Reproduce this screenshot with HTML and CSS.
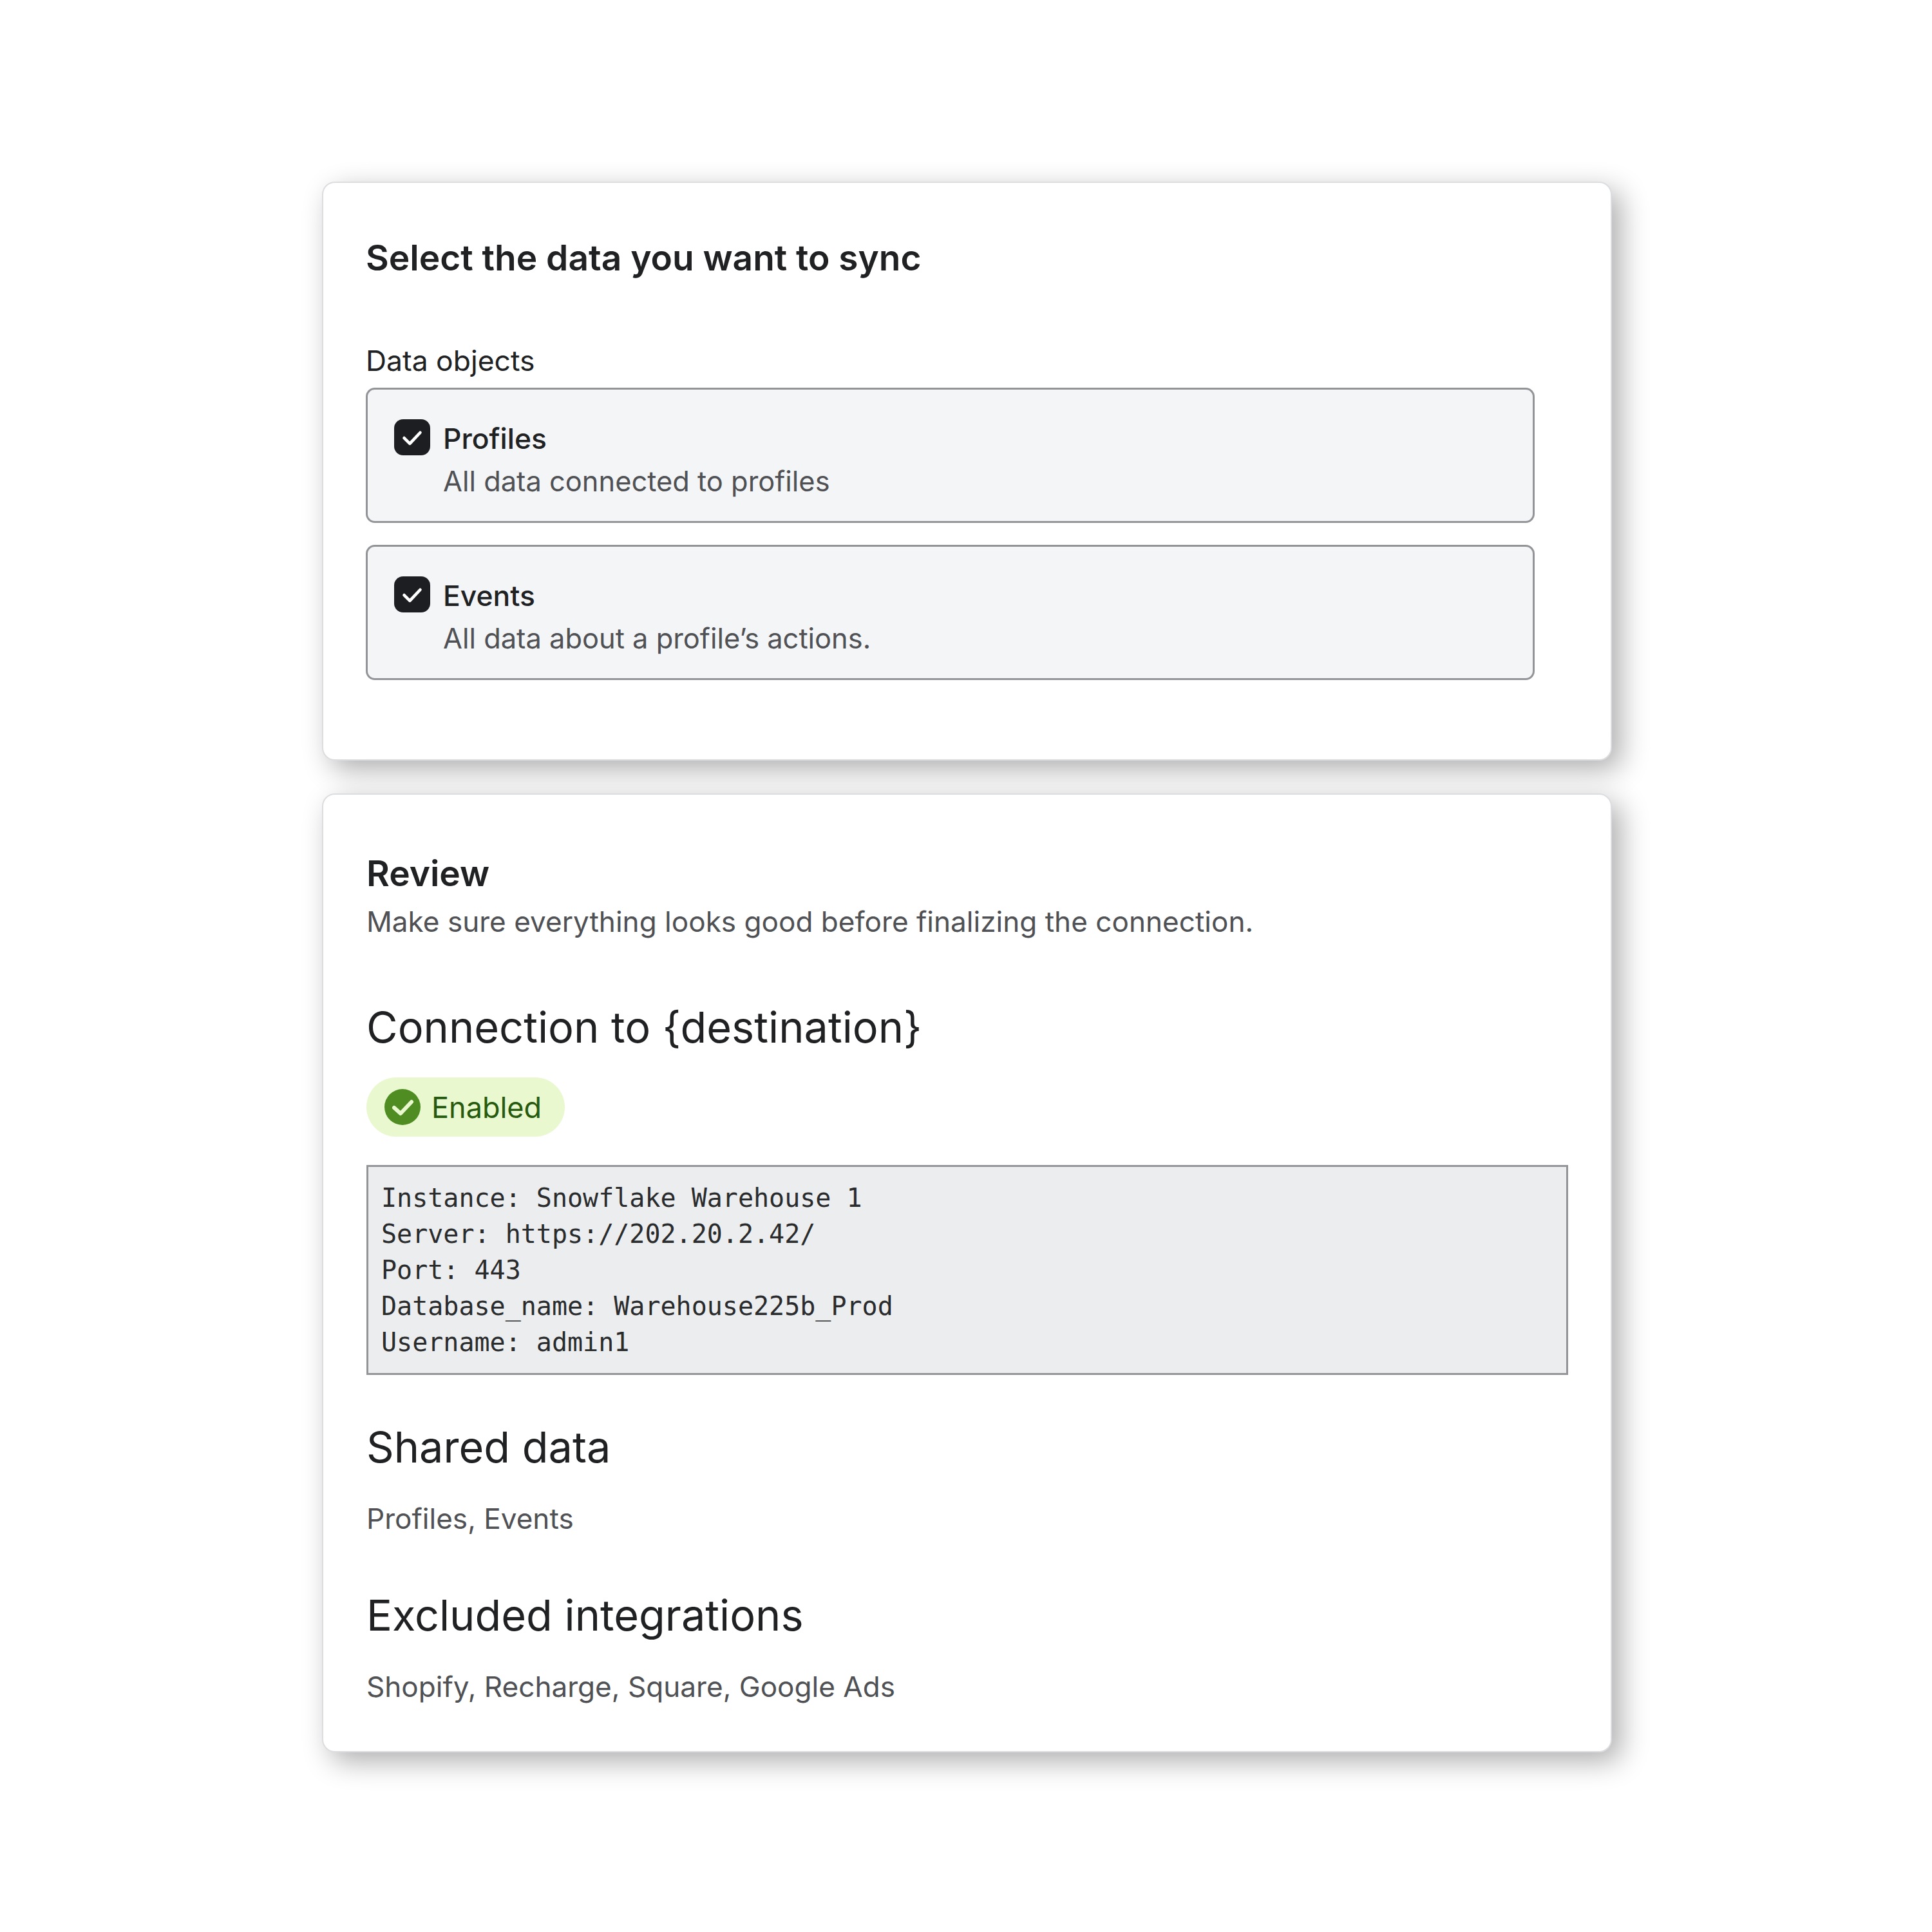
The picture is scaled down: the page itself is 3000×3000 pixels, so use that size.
FILE: index.html
```html
<!DOCTYPE html>
<html lang="en">
<head>
    <meta charset="UTF-8">
    <meta name="viewport" content="width=device-width, initial-scale=1.0">
    <title>Review connection</title>
    <link rel="stylesheet" href="styles.css">
</head>
<body>
    <div class="container">
        <section class="card card-select">
            <h2 class="card-title">Select the data you want to sync</h2>
            <div class="field-label">Data objects</div>
            <div class="option">
                <span class="checkbox">
                    <svg viewBox="0 0 54 54"><path d="M15 28l8.5 8.5L39 20" fill="none" stroke="white" stroke-width="4.5" stroke-linecap="round" stroke-linejoin="round"/></svg>
                </span>
                <div>
                    <div class="option-name">Profiles</div>
                    <div class="option-desc">All data connected to profiles</div>
                </div>
            </div>
            <div class="option">
                <span class="checkbox">
                    <svg viewBox="0 0 54 54"><path d="M15 28l8.5 8.5L39 20" fill="none" stroke="white" stroke-width="4.5" stroke-linecap="round" stroke-linejoin="round"/></svg>
                </span>
                <div>
                    <div class="option-name">Events</div>
                    <div class="option-desc">All data about a profile’s actions.</div>
                </div>
            </div>
        </section>

        <section class="card card-review">
            <h2 class="card-title">Review</h2>
            <div class="muted">Make sure everything looks good before finalizing the connection.</div>

            <h3 class="section-title first">Connection to {destination}</h3>
            <div class="badge">
                <svg class="badge-icon" viewBox="0 0 56 56">
                    <circle cx="28" cy="28" r="28" fill="#4f8c22"/>
                    <path d="M15 29l10 9 17-18" fill="none" stroke="#e9f8cf" stroke-width="6" stroke-linecap="round" stroke-linejoin="round"/>
                </svg>
                Enabled
            </div>
            <pre class="code">Instance: Snowflake Warehouse 1
Server: https://202.20.2.42/
Port: 443
Database_name: Warehouse225b_Prod
Username: admin1</pre>

            <h3 class="section-title">Shared data</h3>
            <div class="muted">Profiles, Events</div>

            <h3 class="section-title">Excluded integrations</h3>
            <div class="muted">Shopify, Recharge, Square, Google Ads</div>
        </section>
    </div>
</body>
</html>
```

FILE: styles.css
```css
body {
    margin: 0;
    background: white;
    font-family: 'Inter', sans-serif;
    color: #202123;
}
.container {
    width: 2003px;
    margin-left: 500px;
    padding: 282px 0 279px;
    display: flex;
    flex-direction: column;
    gap: 51px;
}
.card {
    background: white;
    border: 2px solid #dcdde0;
    border-radius: 20px;
    box-shadow: 14px 14px 44px rgba(0,0,0,0.32);
    box-sizing: border-box;
}
.card-select {
    height: 899px;
    padding: 80px 66px 0;
}
.card-review {
    height: 1489px;
    padding: 86px 66px 0 67px;
}
.card-title {
    margin: 0;
    font-size: 55px;
    line-height: 72px;
    font-weight: 600;
}
.field-label {
    margin-top: 94px;
    font-size: 44.4px;
    line-height: 60px;
}
.option {
    width: 1815px;
    height: 210px;
    box-sizing: border-box;
    margin: 0 0 34px;
    padding: 46px 41px 0;
    background: #f4f5f7;
    border: 3px solid #929497;
    border-radius: 14px;
    display: flex;
    gap: 20px;
}
.field-label + .option {
    margin-top: 12px;
}
.checkbox {
    width: 56px;
    height: 56px;
    flex: none;
    background: #1d1e21;
    border-radius: 14px;
}
.checkbox svg {
    display: block;
    width: 56px;
    height: 56px;
}
.option-name {
    font-size: 44.4px;
    line-height: 60px;
    font-weight: 500;
}
.option-desc {
    margin-top: 5px;
    font-size: 43.4px;
    line-height: 62px;
    color: #4f5155;
}
.muted {
    font-size: 44.1px;
    line-height: 62px;
    color: #4f5155;
}
.card-title + .muted {
    margin-top: 8px;
}
.section-title {
    margin: 68px 0 0;
    font-size: 66.6px;
    line-height: 88px;
    font-weight: 400;
}
.section-title + .muted {
    margin-top: 36px;
}
.muted + .section-title {
    margin-top: 75px;
}
.section-title.first {
    margin-top: 89px;
}
.badge {
    display: inline-flex;
    align-items: center;
    gap: 17px;
    height: 92px;
    margin-top: 34px;
    padding: 0 36px 0 28px;
    border-radius: 46px;
    background: #e9f8cf;
    color: #265a0e;
    font-size: 45px;
}
.badge-icon {
    width: 56px;
    height: 56px;
}
.code {
    margin: 44px 0 0;
    height: 326px;
    box-sizing: border-box;
    padding: 20px 20px;
    background: #ebedef;
    border: 3px solid #929497;
    font-family: 'DejaVu Sans Mono', monospace;
    font-size: 40px;
    line-height: 56px;
    color: #2a2b2d;
}
```
